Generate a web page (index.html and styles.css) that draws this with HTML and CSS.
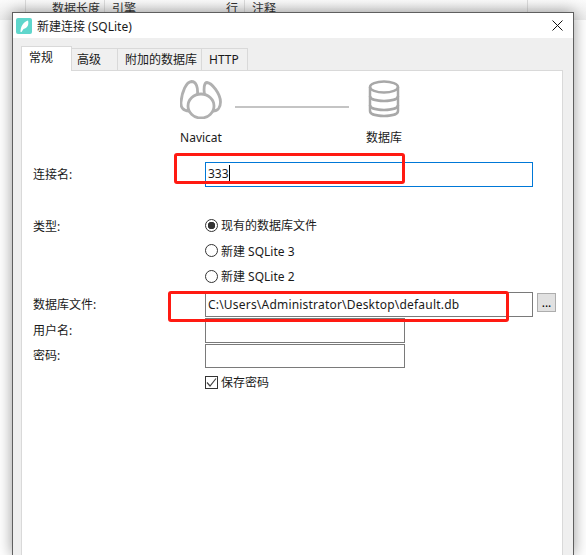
FILE: index.html
```html
<!DOCTYPE html>
<html lang="zh-CN">
<head>
    <meta charset="UTF-8">
    <title>新建连接 (SQLite)</title>
    <link rel="stylesheet" href="styles.css">
</head>
<body>

    <!-- table header behind the dialog -->
    <div class="back-header">
        <span class="back-col col-first"></span>
        <span class="back-col col-len">数据长度</span>
        <span class="back-col col-engine">引擎</span>
        <span class="back-col col-rows">行</span>
        <span class="back-col col-note">注释</span>
    </div>

    <div class="dialog">
        <div class="titlebar">
            <svg class="app-icon" width="16" height="16" viewBox="0 0 16 16">
                <rect width="16" height="16" rx="2" fill="#5fd6cc"/>
                <path d="M4.500 14 C4.500 9 7 4 12 2.500 C13 6 12 10 7.500 11 L5.500 14 Z" fill="#fff"/>
            </svg>
            <span class="title">新建连接 (SQLite)</span>
            <svg class="close" width="11" height="11" viewBox="0 0 11 11">
                <path d="M0.500 0.500 L10.500 10.500 M10.500 0.500 L0.500 10.500" stroke="#111" stroke-width="1" fill="none"/>
            </svg>
        </div>

        <div class="body">
            <div class="tabs">
                <div class="tab active">常规</div>
                <div class="tab tab-adv">高级</div>
                <div class="tab tab-db">附加的数据库</div>
                <div class="tab tab-http">HTTP</div>
            </div>

            <div class="panel">
                <div class="diagram">
                    <div class="node">
                        <svg width="42" height="40" viewBox="9 6 42 40" fill="none" stroke="#b0b0b0" stroke-width="2.800">
                            <ellipse cx="30" cy="33" rx="13" ry="12"/>
                            <path d="M18 38 C12 38 9.500 34 10 29 C11 19 15 9 20.500 8.500 C25.500 8.500 27 15 26.500 21.500"/>
                            <path d="M33.500 21.500 C32.500 16 33 9.500 36 9.500 C41 10 49.500 21 49.500 29 C49.500 34 47 38 42 38"/>
                        </svg>
                        <span class="node-label">Navicat</span>
                    </div>
                    <div class="link"></div>
                    <div class="node">
                        <svg width="32" height="40" viewBox="0 0 32 40" fill="none" stroke="#a8a8a8" stroke-width="2.500">
                            <ellipse cx="16" cy="8" rx="14" ry="5.500"/>
                            <path d="M2 8 V32 C2 35.500 9 37 16 37 C23 37 30 35.500 30 32 V8"/>
                            <path d="M2 17 C2 20.500 9 22 16 22 C23 22 30 20.500 30 17"/>
                            <path d="M2 26 C2 29.500 9 31 16 31 C23 31 30 29.500 30 26"/>
                        </svg>
                        <span class="node-label">数据库</span>
                    </div>
                </div>

                <div class="row row-name">
                    <label class="row-label">连接名:</label>
                    <div class="input input-wide input-focus">333<span class="caret"></span></div>
                </div>

                <div class="row row-type">
                    <label class="row-label">类型:</label>
                    <div class="radios">
                        <div class="option"><span class="radio checked"></span>现有的数据库文件</div>
                        <div class="option"><span class="radio"></span>新建 SQLite 3</div>
                        <div class="option"><span class="radio"></span>新建 SQLite 2</div>
                    </div>
                </div>

                <div class="row row-file">
                    <label class="row-label">数据库文件:</label>
                    <div class="input input-wide input-path">C:\Users\Administrator\Desktop\default.db</div>
                    <button class="browse">...</button>
                </div>
                <div class="row row-user">
                    <label class="row-label">用户名:</label>
                    <div class="input input-short"></div>
                </div>
                <div class="row row-pass">
                    <label class="row-label">密码:</label>
                    <div class="input input-short"></div>
                </div>
                <div class="row row-save">
                    <span class="row-label"></span>
                    <div class="option">
                        <span class="checkbox">
                            <svg width="11" height="11" viewBox="0 0 11 11"><path d="M1 5.500 L4 9 L10 1.500" stroke="#444" stroke-width="1.200" fill="none"/></svg>
                        </span>保存密码
                    </div>
                </div>
            </div>
        </div>
    </div>

    <!-- red annotation boxes drawn on the screenshot -->
    <div class="mark mark-name"></div>
    <div class="mark mark-file"></div>

</body>
</html>
```

FILE: styles.css
```css
* {
    margin: 0;
    padding: 0;
    box-sizing: border-box;
}

html, body {
    height: 100%;
    overflow: hidden;
}

body {
    position: relative;
    font-family: "Noto Sans", "Noto Sans CJK SC", "Liberation Sans", sans-serif;
    font-size: 12px;
    color: #1a1a1a;
    background-color: #fff;
}

/* table header behind the dialog */
.back-header {
    display: flex;
    height: 20px;
    background: linear-gradient(#fbfbfb, #ececec);
    color: #333;
    line-height: 18px;
}

.back-col {
    height: 20px;
    border-right: 1px solid #dcdcdc;
    white-space: nowrap;
}

.col-first {
    width: 26px;
}

.col-len {
    width: 79px;
    padding-right: 4px;
    text-align: right;
}

.col-engine {
    width: 60px;
    padding-left: 7px;
    border-right: 0;
}

.col-rows {
    width: 80px;
    padding-right: 6px;
    text-align: right;
}

.col-note {
    width: 283px;
    padding-left: 7px;
}

/* dialog, its bottom edge is cut off by the screenshot */
.dialog {
    position: absolute;
    left: 12px;
    top: 12px;
    width: 562px;
    height: 543px;
    border: 1px solid #5f5f5f;
    border-bottom: 0;
    background-color: #efefef;
    box-shadow: 0 0 14px rgba(0, 0, 0, 0.4);
}

.titlebar {
    display: flex;
    align-items: center;
    height: 25px;
    padding-left: 3px;
    background-color: #fff;
}

.app-icon {
    margin-right: 5px;
}

.title {
    flex: 1;
}

.close {
    margin-right: 10px;
}

.body {
    padding: 8px 10px 0 8px;
}

.tabs {
    display: flex;
    align-items: flex-end;
    height: 24px;
}

.tab {
    height: 22px;
    line-height: 22px;
    border: 1px solid #d9d9d9;
    border-left: 0;
    border-bottom: 0;
    background-color: #f0f0f0;
}

.tab.active {
    position: relative;
    top: 1px;
    z-index: 1;
    width: 51px;
    height: 25px;
    line-height: 21px;
    padding-left: 7px;
    border-left: 1px solid #d9d9d9;
    background-color: #fff;
}

.tab-adv {
    width: 46px;
    padding-left: 5px;
}

.tab-db {
    width: 84px;
    padding-left: 7px;
}

.tab-http {
    width: 46px;
    padding-left: 7px;
}

.panel {
    height: 485px;
    background-color: #fff;
    border: 1px solid #d9d9d9;
    border-bottom: 0;
    padding-left: 11px;
}

.diagram {
    display: flex;
    height: 91px;
    padding: 8px 0 0 147px;
}

.node {
    display: flex;
    flex-direction: column;
    align-items: center;
    width: 42px;
}

.node svg {
    height: 40px;
    flex: none;
}

.node-label {
    margin-top: 10px;
    line-height: 18px;
    white-space: nowrap;
}

.link {
    width: 114px;
    height: 2px;
    margin: 27px 14px 0 13px;
    background-color: #c4c4c4;
}

.row {
    display: flex;
    align-items: center;
}

.row-label {
    width: 172px;
    flex: none;
    padding-bottom: 2px;
}

.input {
    height: 25px;
    line-height: 21px;
    padding-left: 2px;
    border: 1px solid #7a7a7a;
    background-color: #fff;
    white-space: nowrap;
}

.input-wide {
    width: 328px;
}

.input-short {
    width: 200px;
}

.input-focus {
    border-color: #0078d7;
}

.input-path {
    line-height: 23px;
    letter-spacing: 0.2px;
}

.caret {
    display: inline-block;
    width: 1px;
    height: 16px;
    background-color: #000;
    vertical-align: -3px;
}

.row-name {
    height: 25px;
}

.row-type {
    align-items: flex-start;
    margin-top: 29px;
}

.row-type .row-label {
    padding-top: 1px;
    padding-bottom: 0;
}

.radios {
    display: flex;
    flex-direction: column;
    gap: 7.500px;
}

.option {
    display: flex;
    align-items: center;
    height: 18px;
}

.radio {
    width: 13px;
    height: 13px;
    margin-right: 3px;
    border: 1px solid #333;
    border-radius: 50%;
    background-color: #fff;
}

.radio.checked {
    background: radial-gradient(circle, #333 3.500px, #fff 4px);
}

.row-file {
    margin-top: 7px;
}

.browse {
    align-self: flex-start;
    width: 19px;
    height: 19px;
    margin: 1px 0 0 4px;
    font-family: inherit;
    font-size: 12px;
    line-height: 12px;
    background-color: #e1e1e1;
    border: 1px solid #adadad;
}

.row-user {
    margin-top: 1px;
}

.row-pass {
    margin-top: 1px;
}

.row-pass .input {
    height: 24px;
}

.row-save {
    margin-top: 5px;
}

.checkbox {
    display: flex;
    align-items: center;
    justify-content: center;
    width: 13px;
    height: 13px;
    margin-right: 3px;
    border: 1px solid #333;
    background-color: #fff;
}

/* annotations */
.mark {
    position: absolute;
    border: 3px solid #ff1a12;
    border-radius: 3px;
}

.mark-name {
    left: 174px;
    top: 153px;
    width: 231px;
    height: 31px;
}

.mark-file {
    left: 168px;
    top: 291px;
    width: 341px;
    height: 31px;
}
```
